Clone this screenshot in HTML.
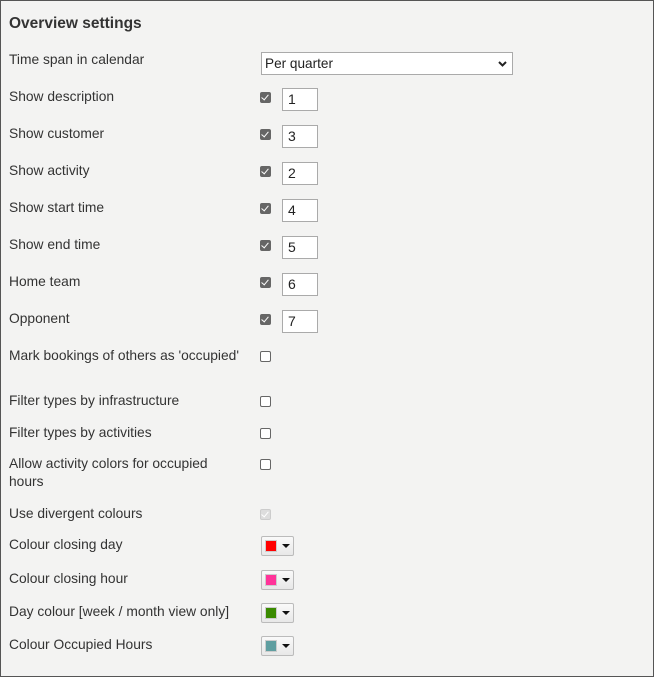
<!DOCTYPE html>
<html><head><style>
body{margin:0;width:654px;height:677px;background:#fff;font-family:"Liberation Sans",sans-serif;}
.box{position:absolute;left:0;top:0;width:652px;height:675px;border:1px solid #555;background:#f3f3f2;}
.t{position:absolute;left:8px;font-size:13.8px;color:#333;line-height:18px;}
h1{position:absolute;left:8px;top:14px;margin:0;font-size:15.5px;font-weight:bold;color:#333;}
.cb{position:absolute;left:259px;width:9px;height:9px;border:1px solid #666;border-radius:2px;background:#fff;}
.cb.on{background:#666;}
.cb.on:after{content:"";position:absolute;left:2px;top:0px;width:3px;height:6px;border:solid #fff;border-width:0 1.5px 1.5px 0;transform:rotate(40deg);}
.cb.dis{background:#ddd;border-color:#ccc;}
.cb.dis:after{content:"";position:absolute;left:2px;top:0px;width:3px;height:6px;border:solid #fff;border-width:0 1.5px 1.5px 0;transform:rotate(40deg);}
.in{position:absolute;left:281px;border:1px solid #aaa;background:#fff;font-size:14px;line-height:21px;padding-left:5px;box-sizing:border-box;width:36px;height:23px;color:#222;}
.sel{position:absolute;left:260px;top:51px;width:252px;height:23px;box-sizing:border-box;border:1px solid #aaa;background:#fff;font-size:13.6px;line-height:21px;padding-left:3px;color:#222;}
.cp{position:absolute;left:260px;width:33px;height:20px;box-sizing:border-box;border:1px solid #bbb;border-radius:2px;background:linear-gradient(#fafafa,#e8e8e8);}
.cp i{position:absolute;left:3px;top:3px;width:10px;height:10px;border:1px solid #ccc;}
.cp b{position:absolute;left:20px;top:7px;border-left:4px solid transparent;border-right:4px solid transparent;border-top:4px solid #111;}
</style></head><body><div class="box">
<h1>Overview settings</h1>
<div class="t" style="top:50px">Time span in calendar</div>
<div class="sel">Per quarter<svg style="position:absolute;right:5px;top:8px" width="9" height="6"><path d="M1 1L4.5 4.5L8 1" stroke="#222" stroke-width="2" fill="none"/></svg></div>
<div class="t" style="top:87px">Show description</div><div class="cb on" style="top:91px"></div><div class="in" style="top:87px">1</div>
<div class="t" style="top:124px">Show customer</div><div class="cb on" style="top:128px"></div><div class="in" style="top:124px">3</div>
<div class="t" style="top:161px">Show activity</div><div class="cb on" style="top:165px"></div><div class="in" style="top:161px">2</div>
<div class="t" style="top:198px">Show start time</div><div class="cb on" style="top:202px"></div><div class="in" style="top:198px">4</div>
<div class="t" style="top:235px">Show end time</div><div class="cb on" style="top:239px"></div><div class="in" style="top:235px">5</div>
<div class="t" style="top:272px">Home team</div><div class="cb on" style="top:276px"></div><div class="in" style="top:272px">6</div>
<div class="t" style="top:309px">Opponent</div><div class="cb on" style="top:313px"></div><div class="in" style="top:309px">7</div>
<div class="t" style="top:346px">Mark bookings of others as 'occupied'</div><div class="cb" style="top:350px"></div>
<div class="t" style="top:391px">Filter types by infrastructure</div><div class="cb" style="top:395px"></div>
<div class="t" style="top:423px">Filter types by activities</div><div class="cb" style="top:427px"></div>
<div class="t" style="top:454px">Allow activity colors for occupied<br>hours</div><div class="cb" style="top:458px"></div>
<div class="t" style="top:504px">Use divergent colours</div><div class="cb dis" style="top:508px"></div>
<div class="t" style="top:535px">Colour closing day</div><div class="cp" style="top:535px"><i style="background:#f00"></i><b></b></div>
<div class="t" style="top:569px">Colour closing hour</div><div class="cp" style="top:569px"><i style="background:#ff3399"></i><b></b></div>
<div class="t" style="top:602px">Day colour [week / month view only]</div><div class="cp" style="top:602px"><i style="background:#3a8a00"></i><b></b></div>
<div class="t" style="top:635px">Colour Occupied Hours</div><div class="cp" style="top:635px"><i style="background:#5f9ea0"></i><b></b></div>
</div></body></html>
